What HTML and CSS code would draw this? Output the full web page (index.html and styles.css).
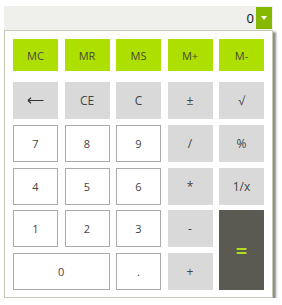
FILE: index.html
```html
<!DOCTYPE html>
<html lang="en">
<head>
    <meta charset="UTF-8">
    <title>Calculator</title>
    <link rel="stylesheet" href="styles.css">
</head>
<body>
    <div class="combo">
        <span class="value">0</span>
        <span class="drop"><span class="caret"></span></span>
    </div>
    <div class="popup">
        <div class="memory">
            <div class="key mem">MC</div>
            <div class="key mem">MR</div>
            <div class="key mem">MS</div>
            <div class="key mem">M+</div>
            <div class="key mem">M-</div>
        </div>
        <div class="keys">
            <div class="key op">
                <svg width="17" height="7" viewBox="0 0 17 7"><path d="M1 3.5H16.5M1 3.5L4 0.8M1 3.5L4 6.2" stroke="#333" stroke-width="1.2" fill="none"/></svg>
            </div>
            <div class="key op">CE</div>
            <div class="key op">C</div>
            <div class="key op">±</div>
            <div class="key op">√</div>

            <div class="key num">7</div>
            <div class="key num">8</div>
            <div class="key num">9</div>
            <div class="key op">/</div>
            <div class="key op">%</div>

            <div class="key num">4</div>
            <div class="key num">5</div>
            <div class="key num">6</div>
            <div class="key op">*</div>
            <div class="key op">1/x</div>

            <div class="key num">1</div>
            <div class="key num">2</div>
            <div class="key num">3</div>
            <div class="key op">-</div>
            <div class="key equals">=</div>

            <div class="key num zero">0</div>
            <div class="key num">.</div>
            <div class="key op">+</div>
        </div>
    </div>
</body>
</html>
```

FILE: styles.css
```css
body {
    margin: 0;
    background: #fff;
    font-family: "Open Sans", "DejaVu Sans", sans-serif;
    font-size: 11px;
    color: #444;
}

/* campo in alto con il valore */
.combo {
    margin: 6px 9px 0 4px;
    height: 24px;
    background: #eff0ec;
    display: flex;
    justify-content: flex-end;
    align-items: center;
    padding-right: 1px;
}

.value {
    font-size: 13px;
    color: #111;
    margin-right: 2px;
}

.drop {
    width: 16px;
    height: 22px;
    background: #86b800;
    display: flex;
    justify-content: center;
    align-items: center;
}

.caret {
    width: 0;
    height: 0;
    border-left: 3px solid transparent;
    border-right: 3px solid transparent;
    border-top: 4px solid #fff;
}

/* pannello della calcolatrice */
.popup {
    margin-left: 4px;
    width: 251px;
    padding: 8px 8px 7px 8px;
    border: 1px solid #c8c8b4;
    background: #fff;
    box-shadow: 3px 2px 2px rgba(0, 0, 0, 0.45);
}

.memory {
    display: flex;
    gap: 6.5px;
    margin-bottom: 11px;
}

.keys {
    display: grid;
    grid-template-columns: repeat(5, 45px);
    grid-auto-rows: 37px;
    column-gap: 6.5px;
    row-gap: 5.75px;
}

.key {
    display: flex;
    justify-content: center;
    align-items: center;
    box-sizing: border-box;
}

.mem {
    width: 45px;
    height: 32px;
    background: #addf00;
    color: #4a4a3a;
}

.op {
    background: #d9d9d9;
    font-size: 12px;
    color: #444;
}

.num {
    background: #fff;
    border: 1px solid #aaa;
    font-size: 11px;
    color: #444;
}

.zero {
    grid-column: span 2;
}

.equals {
    grid-row: span 2;
    background: #5a5a52;
    color: #b2dc1e;
    font-size: 20px;
    font-weight: bold;
}
```
